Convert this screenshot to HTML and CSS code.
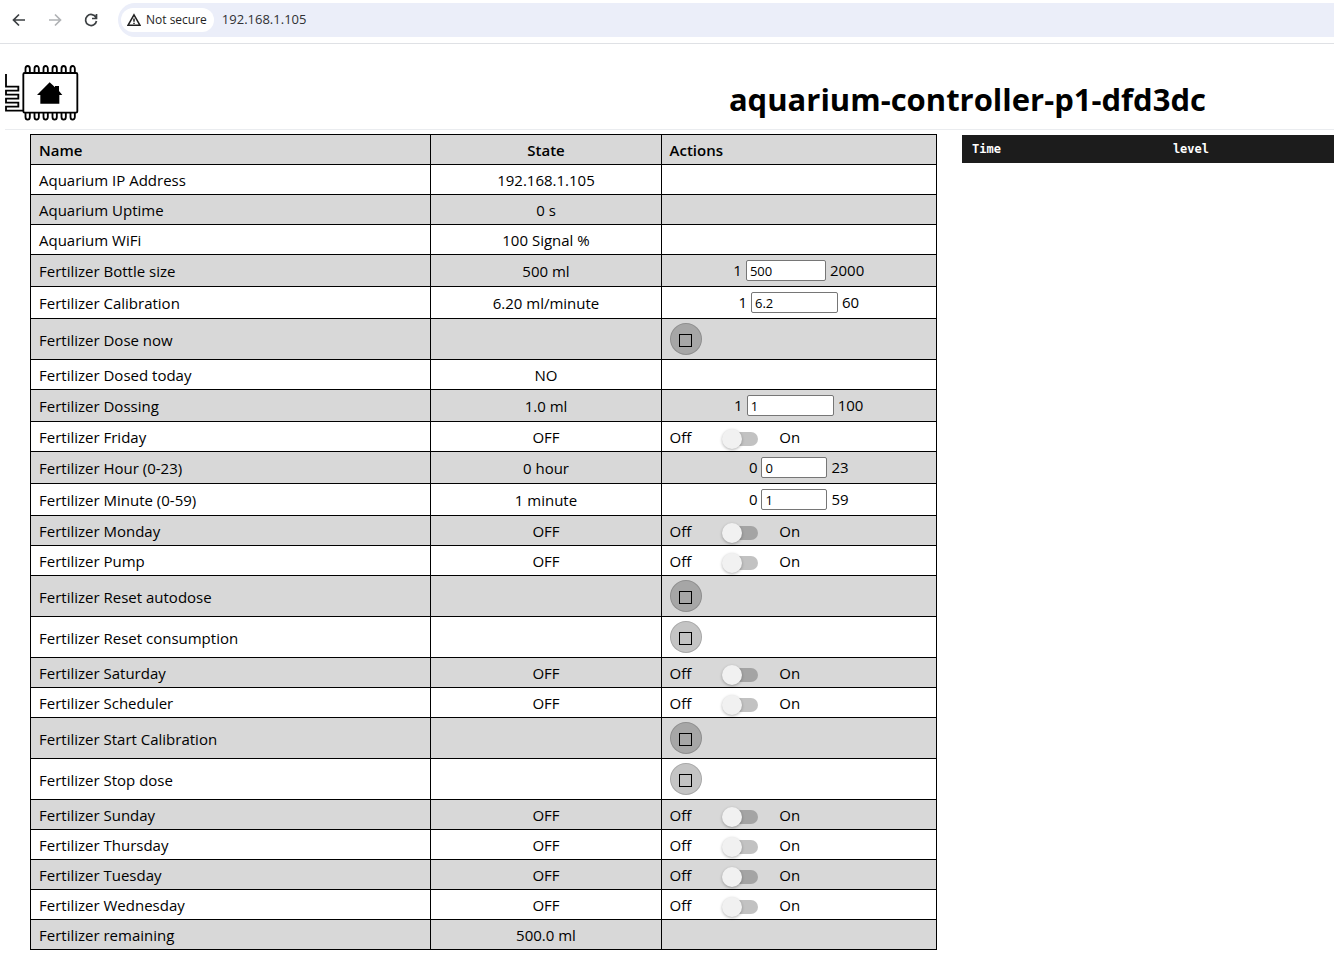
FILE: index.html
```html
<!DOCTYPE html>
<html lang="en">
<head>
<meta charset="utf-8">
<title>aquarium-controller-p1-dfd3dc</title>
<link rel="stylesheet" href="styles.css">
</head>
<body>
<nav class="toolbar" aria-label="Browser">
  <button class="nav-btn" aria-label="Back"><svg width="18" height="18" viewBox="0 0 18 18"><path d="M15 9H4M9 3.500 3.500 9 9 14.500"/></svg></button>
  <button class="nav-btn faded" aria-label="Forward"><svg width="18" height="18" viewBox="0 0 18 18"><path d="M3 9H14M9 3.500 14.500 9 9 14.500"/></svg></button>
  <button class="nav-btn" aria-label="Reload"><svg width="18" height="18" viewBox="0 0 18 18"><path d="M14 6.500A5.500 5.500 0 1 0 14.500 10M14.500 3V7.500H10"/></svg></button>
  <div class="omnibox">
    <button class="chip"><svg width="14" height="14" viewBox="0 0 14 14"><path d="M7 1.800 13 12.300H1ZM7 5.500V8.800M7 9.800V11"/></svg>Not secure</button>
    <span class="url">192.168.1.105</span>
  </div>
</nav>
<header class="masthead">
  <svg class="logo" width="74" height="58" viewBox="14 24 222 174" aria-hidden="true">
    <g fill="none" stroke="#000" stroke-width="5.500">
      <rect x="69" y="51" width="162" height="119" rx="4"/>
      <path d="M75.500 50V38a6.500 8 0 0 1 13 0V50M102.500 50V38a6.500 8 0 0 1 13 0V50M129.500 50V38a6.500 8 0 0 1 13 0V50M156.500 50V38a6.500 8 0 0 1 13 0V50M183.500 50V38a6.500 8 0 0 1 13 0V50M210.500 50V38a6.500 8 0 0 1 13 0V50"/>
      <path d="M75.500 171V183a6.500 8 0 0 0 13 0V171M102.500 171V183a6.500 8 0 0 0 13 0V171M129.500 171V183a6.500 8 0 0 0 13 0V171M156.500 171V183a6.500 8 0 0 0 13 0V171M183.500 171V183a6.500 8 0 0 0 13 0V171M210.500 171V183a6.500 8 0 0 0 13 0V171"/>
      <path d="M17 54V92H54V104H17V116H54V128H17V140H54V152H17V164H70"/>
    </g>
    <path d="M148 79 164 94V90H176V105L186 117H177V143H120V117H110Z"/>
  </svg>
  <h1>aquarium-controller-p1-dfd3dc</h1>
</header>
<main class="panels">
  <table class="entities">
    <colgroup><col class="c-name"><col class="c-state"><col class="c-act"></colgroup>
    <thead><tr><th>Name</th><th>State</th><th>Actions</th></tr></thead>
    <tbody>
    <tr><td>Aquarium IP Address</td><td>192.168.1.105</td><td></td></tr>
    <tr><td>Aquarium Uptime</td><td>0 s</td><td></td></tr>
    <tr><td>Aquarium WiFi</td><td>100 Signal %</td><td></td></tr>
    <tr><td>Fertilizer Bottle size</td><td>500 ml</td><td><div class="range"><label for="bottle">1</label><input class="w-md" id="bottle" type="text" inputmode="decimal" value="500"><span>2000</span></div></td></tr>
    <tr><td>Fertilizer Calibration</td><td>6.20 ml/minute</td><td><div class="range"><label for="calib">1</label><input class="w-lg" id="calib" type="text" inputmode="decimal" value="6.2"><span>60</span></div></td></tr>
    <tr><td>Fertilizer Dose now</td><td></td><td><button class="round" aria-label="Dose now"><i></i></button></td></tr>
    <tr><td>Fertilizer Dosed today</td><td>NO</td><td></td></tr>
    <tr><td>Fertilizer Dossing</td><td>1.0 ml</td><td><div class="range"><label for="dossing">1</label><input class="w-lg" id="dossing" type="text" inputmode="decimal" value="1"><span>100</span></div></td></tr>
    <tr><td>Fertilizer Friday</td><td>OFF</td><td><label class="toggle">Off<input type="checkbox">On</label></td></tr>
    <tr><td>Fertilizer Hour (0-23)</td><td>0 hour</td><td><div class="range"><label for="hour">0</label><input class="w-sm" id="hour" type="text" inputmode="decimal" value="0"><span>23</span></div></td></tr>
    <tr><td>Fertilizer Minute (0-59)</td><td>1 minute</td><td><div class="range"><label for="minute">0</label><input class="w-sm" id="minute" type="text" inputmode="decimal" value="1"><span>59</span></div></td></tr>
    <tr><td>Fertilizer Monday</td><td>OFF</td><td><label class="toggle">Off<input type="checkbox">On</label></td></tr>
    <tr><td>Fertilizer Pump</td><td>OFF</td><td><label class="toggle">Off<input type="checkbox">On</label></td></tr>
    <tr><td>Fertilizer Reset autodose</td><td></td><td><button class="round" aria-label="Reset autodose"><i></i></button></td></tr>
    <tr><td>Fertilizer Reset consumption</td><td></td><td><button class="round" aria-label="Reset consumption"><i></i></button></td></tr>
    <tr><td>Fertilizer Saturday</td><td>OFF</td><td><label class="toggle">Off<input type="checkbox">On</label></td></tr>
    <tr><td>Fertilizer Scheduler</td><td>OFF</td><td><label class="toggle">Off<input type="checkbox">On</label></td></tr>
    <tr><td>Fertilizer Start Calibration</td><td></td><td><button class="round" aria-label="Start Calibration"><i></i></button></td></tr>
    <tr><td>Fertilizer Stop dose</td><td></td><td><button class="round" aria-label="Stop dose"><i></i></button></td></tr>
    <tr><td>Fertilizer Sunday</td><td>OFF</td><td><label class="toggle">Off<input type="checkbox">On</label></td></tr>
    <tr><td>Fertilizer Thursday</td><td>OFF</td><td><label class="toggle">Off<input type="checkbox">On</label></td></tr>
    <tr><td>Fertilizer Tuesday</td><td>OFF</td><td><label class="toggle">Off<input type="checkbox">On</label></td></tr>
    <tr><td>Fertilizer Wednesday</td><td>OFF</td><td><label class="toggle">Off<input type="checkbox">On</label></td></tr>
    <tr><td>Fertilizer remaining</td><td>500.0 ml</td><td></td></tr>
    </tbody>
  </table>
  <table class="log">
    <thead><tr><th>Time</th><th>level</th></tr></thead>
  </table>
</main>
</body>
</html>
```
FILE: styles.css
```css
* { box-sizing: border-box; }
body {
  margin: 0;
  background: #fff;
  color: #000;
  font: 15px/21px "Open Sans", "Noto Sans", sans-serif;
}
button { font: inherit; color: inherit; border: 0; padding: 0; background: none; }

.toolbar {
  display: flex;
  align-items: center;
  gap: 18px;
  height: 44px;
  padding: 0 0 4px 10px;
  border-bottom: 1px solid #dfe1e5;
}
.nav-btn { display: flex; width: 18px; height: 18px; }
.nav-btn svg { fill: none; stroke: #3c4043; stroke-width: 1.7; }
.nav-btn.faded svg { stroke: #b0b2b5; }
.omnibox {
  flex: 1;
  display: flex;
  align-items: center;
  gap: 8px;
  height: 34px;
  padding-left: 3px;
  border-radius: 17px 0 0 17px;
  background: #ebeef9;
}
.chip {
  display: flex;
  align-items: center;
  gap: 5px;
  height: 24px;
  padding: 0 7px 0 6px;
  border-radius: 12px;
  background: #fff;
  color: #1f1f1f;
  font-size: 12px;
  white-space: nowrap;
}
.chip svg { fill: none; stroke: #1f1f1f; stroke-width: 1.5; }
.url { font-size: 13px; color: #303134; }

.masthead {
  display: flex;
  justify-content: space-between;
  align-items: center;
  height: 86px;
  margin-left: 5px;
  padding: 12px 128px 0 0;
  border-bottom: 1px solid #eaecef;
}
.logo { flex: none; }
h1 { margin: 0; padding-top: 12px; font-size: 31px; line-height: 40px; font-weight: 700; }

.panels {
  display: grid;
  grid-template-columns: 907fr 372fr;
  gap: 25px;
  align-items: start;
  padding: 4px 0 16px 30px;
}
.entities {
  width: 100%;
  table-layout: fixed;
  border-collapse: collapse;
}
.c-name { width: 44.2%; }
.c-state { width: 25.4%; }
.entities th, .entities td {
  height: 30px;
  padding: 5px 8px 3px;
  border: 1px solid #000;
  text-align: left;
}
.entities td:has(.range), .entities td:has(.round) { padding: 4px 8px; }
.entities th { font-weight: 600; }
.entities th:nth-child(2), .entities td:nth-child(2) { text-align: center; }
.entities thead tr, .entities tbody tr:nth-child(even) { background: #d8d8d8; }

.range { display: flex; justify-content: center; align-items: center; gap: 4px; height: 23px; }
.range input {
  height: 21px;
  padding: 0 3px;
  border: 1px solid #767676;
  border-radius: 2px;
  background: #fff;
  font: 13px "Open Sans", sans-serif;
}
.w-sm { width: 66px; }
.w-md { width: 80px; }
.w-lg { width: 87px; }

.round {
  display: flex;
  align-items: center;
  justify-content: center;
  width: 32px;
  height: 32px;
  border: 1px solid rgba(0, 0, 0, .15);
  border-radius: 50%;
  background: rgba(0, 0, 0, .23);
}
.round i { width: 13px; height: 13px; margin-top: 2px; border: 1px solid #000; }

.toggle { display: flex; align-items: center; }
.toggle input {
  appearance: none;
  position: relative;
  width: 34px;
  height: 14px;
  margin: 3px 21px 0 33px;
  border-radius: 7px;
  background: rgba(0, 0, 0, .24);
}
.toggle input::before {
  content: "";
  position: absolute;
  top: -3px;
  left: -2px;
  width: 20px;
  height: 20px;
  border-radius: 50%;
  background: #f1f1f1;
  box-shadow: 0 1px 3px rgba(0, 0, 0, .3);
}
.toggle input:checked::before { left: 16px; }

.log {
  width: 100%;
  table-layout: fixed;
  border-collapse: collapse;
  margin-top: 1px;
  background: #1c1c1c;
  color: #fff;
  font: bold 12px/20px "DejaVu Sans Mono", monospace;
}
.log th { padding: 4px 10px; text-align: left; }
.log th:first-child { width: 54%; }
```
